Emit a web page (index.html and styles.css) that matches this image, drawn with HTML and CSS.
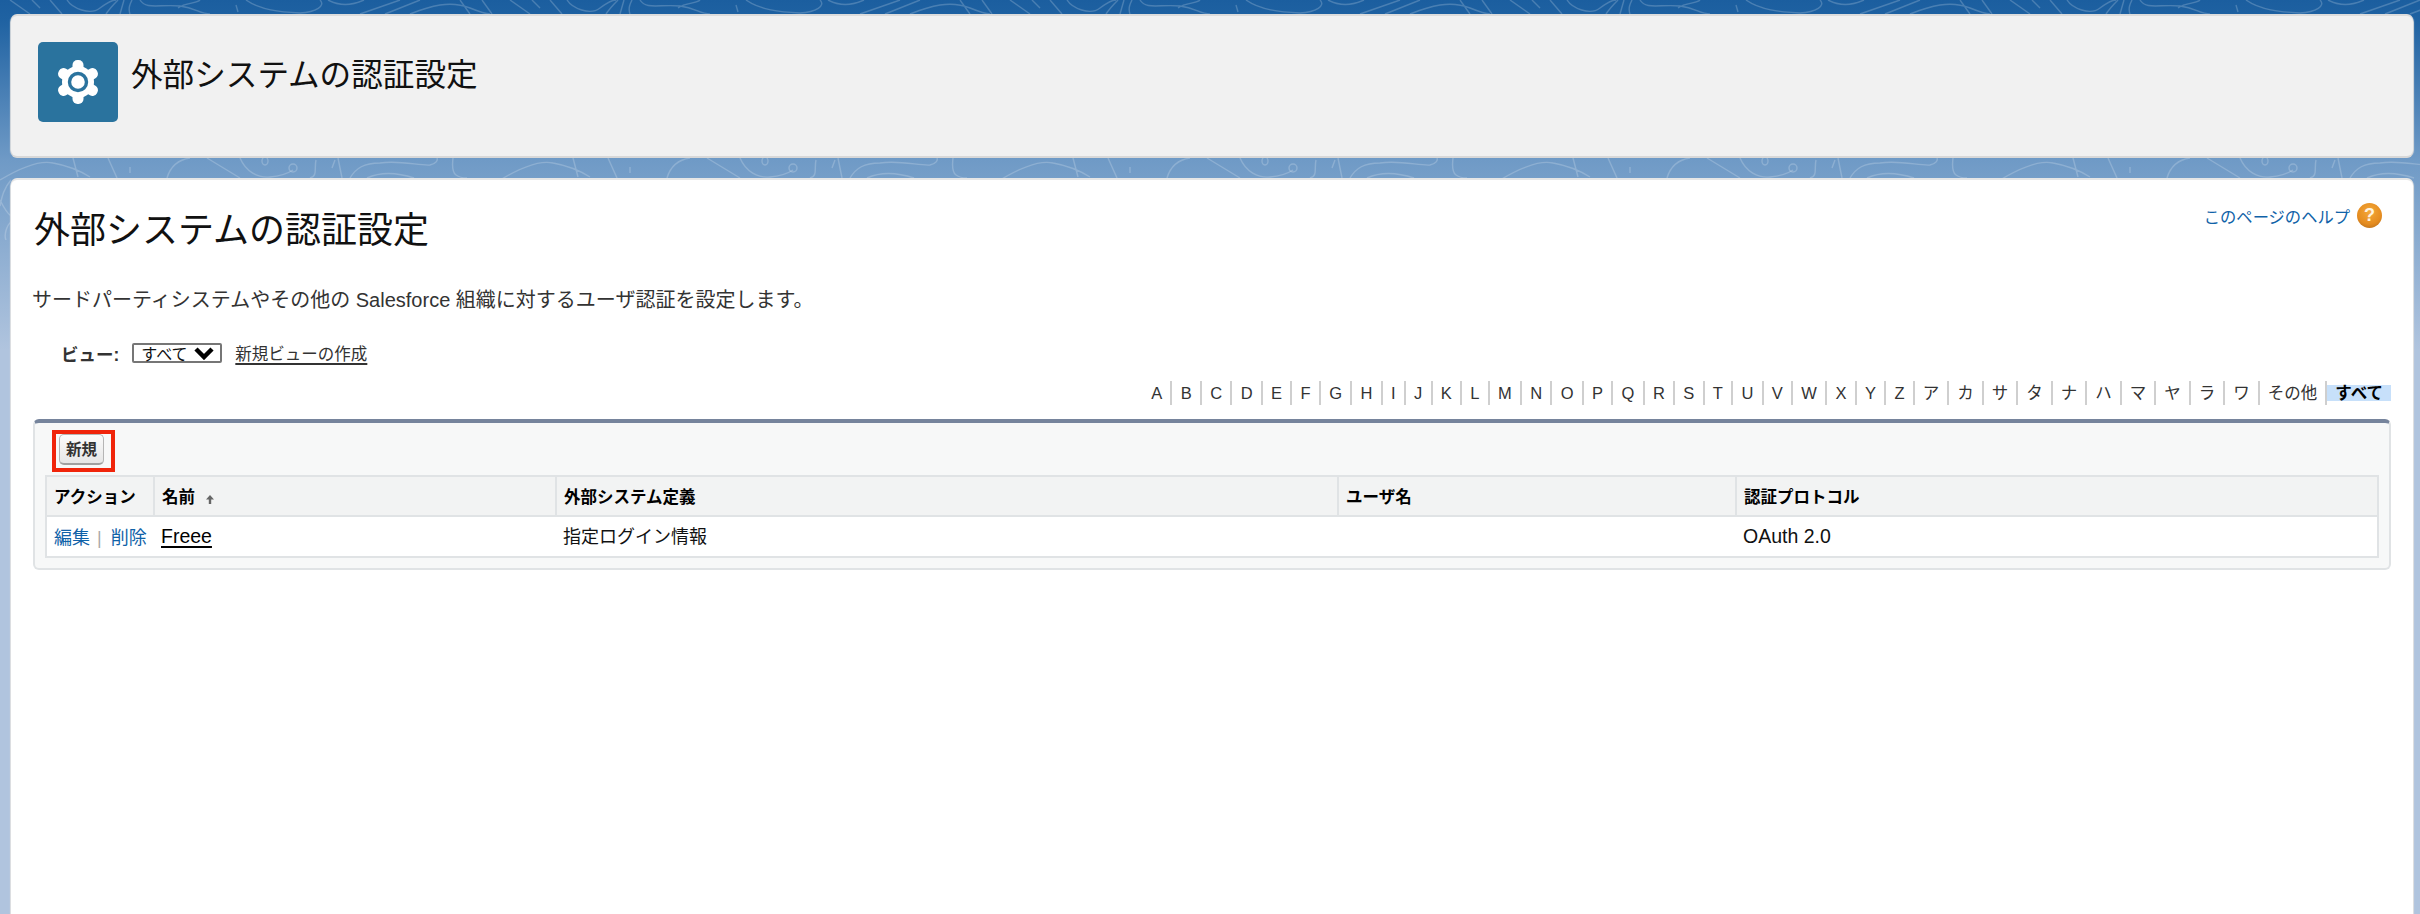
FILE: index.html
```html
<!DOCTYPE html>
<html lang="ja">
<head>
<meta charset="utf-8">
<title>外部システムの認証設定</title>
<link rel="stylesheet" href="styles.css">
</head>
<body>
<svg class="contours" width="2420" height="240" aria-hidden="true">
  <defs>
    <pattern id="topo" width="500" height="240" patternUnits="userSpaceOnUse">
      <g fill="none" stroke="#fff" stroke-opacity=".2" stroke-width="1.4">
        <path d="M10 0L30 14M32 0L40 8M50 0L62 14M67 0C72 8 90 16 100 8C108 2 112 0 116 0M106 14C110 8 114 4 118 0M120 14L124 0M130 14C128 8 130 4 132 0M140 0C146 10 160 4 180 6C196 8 200 14 210 14M200 0C196 4 186 2 178 8M236 5L238 12M246 0C260 10 280 12 300 13C316 12 326 6 320 0M328 0C340 6 350 6 364 0M360 14L400 0M385 14L420 0M410 14C430 6 450 0 470 8C480 12 486 14 490 14M460 0L470 14M482 0L492 14"/>
        <path d="M0 180C20 168 40 160 53 163C70 166 82 172 90 177M73 158L78 177M108 158L117 178M130 167V173M167 178C170 168 176 160 190 158M207 158L240 178M240 158C246 172 258 178 270 177C282 176 290 172 293 170M350 178C356 168 364 163 380 163C400 160 420 166 430 165C436 164 438 160 437 158M453 158C452 166 452 172 456 175C460 178 464 178 467 178M367 178C380 172 396 172 414 178M332 168L335 160M338 158L342 178M316 160C314 168 318 176 310 178"/>
        <circle cx="293" cy="168" r="4"/>
        <ellipse cx="265" cy="161" rx="3" ry="4"/>
        <path d="M0 200C4 208 8 214 11 216M11 180C4 188 2 196 0 206M11 222C6 226 4 236 6 240"/>
      </g>
    </pattern>
  </defs>
  <rect width="2420" height="240" fill="url(#topo)"/>
</svg>

<header class="page-head">
  <div class="head-icon">
    <svg viewBox="0 0 52 52" width="52" height="52" aria-hidden="true">
      <g fill="#fff">
        <circle cx="26" cy="26" r="16"/>
        <rect x="20.500" y="4" width="11" height="44" rx="5"/>
        <rect x="20.500" y="4" width="11" height="44" rx="5" transform="rotate(60 26 26)"/>
        <rect x="20.500" y="4" width="11" height="44" rx="5" transform="rotate(120 26 26)"/>
      </g>
      <circle cx="26" cy="26" r="8.500" fill="#fff" stroke="#2a739e" stroke-width="3.400"/>
    </svg>
  </div>
  <h1 class="head-title">外部システムの認証設定</h1>
</header>

<main class="content">
  <div class="title-row">
    <h2 class="page-title">外部システムの認証設定</h2>
    <a class="help-link" href="#">このページのヘルプ<span class="help-icon">?</span></a>
  </div>
  <p class="description">サードパーティシステムやその他の Salesforce 組織に対するユーザ認証を設定します。</p>
  <div class="view-row">
    <label class="view-label">ビュー:</label>
    <div class="view-select">すべて
      <svg class="chevron" viewBox="0 0 20 14" width="20" height="14" aria-hidden="true"><path d="M2 3l8 8 8-8" fill="none" stroke="#000" stroke-width="4.500"/></svg>
    </div>
    <a class="view-new" href="#">新規ビューの作成</a>
  </div>
  <nav class="alpha">
    <a>A</a><a>B</a><a>C</a><a>D</a><a>E</a><a>F</a><a>G</a><a>H</a><a>I</a><a>J</a><a>K</a><a>L</a><a>M</a><a>N</a><a>O</a><a>P</a><a>Q</a><a>R</a><a>S</a><a>T</a><a>U</a><a>V</a><a>W</a><a>X</a><a>Y</a><a>Z</a><a class="kana">ア</a><a class="kana">カ</a><a class="kana">サ</a><a class="kana">タ</a><a class="kana">ナ</a><a class="kana">ハ</a><a class="kana">マ</a><a class="kana">ヤ</a><a class="kana">ラ</a><a class="kana">ワ</a><a class="kana">その他</a><a class="current">すべて</a>
  </nav>
  <section class="list-block">
    <div class="list-buttons">
      <div class="highlight"><button class="btn" type="button">新規</button></div>
    </div>
    <table class="list">
      <colgroup><col class="c1"><col class="c2"><col class="c3"><col class="c4"><col></colgroup>
      <thead>
        <tr>
          <th>アクション</th>
          <th>名前<svg class="sort" viewBox="0 0 8 9" width="8" height="9" aria-hidden="true"><path d="M4 0L8 4.500H5.200V9H2.800V4.500H0z" fill="#666"/></svg></th>
          <th>外部システム定義</th>
          <th>ユーザ名</th>
          <th>認証プロトコル</th>
        </tr>
      </thead>
      <tbody>
        <tr>
          <td class="actions"><a class="action" href="#">編集</a><span class="pipe">|</span><a class="action" href="#">削除</a></td>
          <td class="latin"><a class="name" href="#">Freee</a></td>
          <td>指定ログイン情報</td>
          <td></td>
          <td class="latin">OAuth 2.0</td>
        </tr>
      </tbody>
    </table>
  </section>
</main>
</body>
</html>
```
FILE: styles.css
```css
* { box-sizing: border-box; }
html, body { height: 914px; }
body {
  margin: 0;
  position: relative;
  overflow: hidden;
  padding: 16px 7px 0 11px;
  display: flex;
  flex-direction: column;
  gap: 24px;
  font-family: "Liberation Sans", "Noto Sans CJK JP", sans-serif;
  color: #222;
  background: linear-gradient(180deg, #1b5e9f 0, #1f62a2 20px, #6f9ac6 160px, #b0c4de 350px, #b0c4de 100%);
}
.contours { position: absolute; left: 0; top: 0; }
.page-head, .content { position: relative; }
.page-head {
  height: 140px;
  flex: none;
  display: flex;
  align-items: flex-start;
  gap: 13px;
  padding: 26px 27px 0;
  background: #f1f1f1;
  border-radius: 6px;
  box-shadow: 0 2px 0 #d8d8d8, 0 -2px 0 #dcdcdc, 0 0 1px 1px #dedede;
}
.head-icon {
  width: 80px;
  height: 80px;
  flex: none;
  display: flex;
  align-items: center;
  justify-content: center;
  background: #2a739e;
  border-radius: 5px;
}
.head-title {
  margin: 13px 0 0;
  font-size: 31.600px;
  line-height: 40px;
  font-weight: 400;
  color: #111;
}
.content {
  flex: 1;
  background: #fff;
  border-radius: 6px 6px 0 0;
  padding: 22px 22px 0;
  box-shadow: 0 -2px 0 #e6e6e6, 0 0 1px 1px #e2e2e2;
}
.title-row { display: flex; justify-content: space-between; align-items: flex-start; }
.page-title {
  margin: 6px 0 0 1px;
  font-size: 36px;
  line-height: 46px;
  font-weight: 400;
  color: #111;
}
.help-link {
  display: flex;
  align-items: center;
  gap: 7px;
  margin: 1px 9px 0 0;
  font-size: 16.300px;
  color: #0f62a8;
  text-decoration: none;
}
.help-icon {
  width: 25px;
  height: 25px;
  border-radius: 50%;
  display: flex;
  align-items: center;
  justify-content: center;
  font-size: 18px;
  font-weight: 700;
  color: #fff4e0;
  background: radial-gradient(circle at 50% 35%, #f4a93a, #e58c1f 60%, #a8641c);
}
.description {
  margin: 33px 0 0 -1px;
  font-size: 20px;
  line-height: 26px;
  color: #333;
}
.view-row {
  display: flex;
  align-items: center;
  gap: 13px;
  margin: 28px 0 0 28px;
  height: 24px;
}
.view-label { font-size: 17.500px; font-weight: 700; color: #333; }
.view-select {
  display: flex;
  align-items: center;
  justify-content: space-between;
  width: 90px;
  height: 20px;
  padding: 0 6px 0 7px;
  border: 2px solid #767676;
  border-radius: 2px;
  font-size: 16px;
  color: #111;
}
.view-new {
  font-size: 16.500px;
  color: #333;
  text-decoration: underline;
  text-decoration-thickness: 2px;
  text-underline-offset: 3px;
}
.alpha {
  display: flex;
  justify-content: flex-end;
  align-items: center;
  height: 24px;
  margin: 16px 0 0;
  font-size: 16.500px;
  color: #333;
}
.alpha a {
  padding: 0 8.250px;
  line-height: 24px;
  border-right: 2px solid #cfcfcf;
}
.alpha a.kana { padding: 0 8px; }
.alpha a.current {
  border: 0;
  height: 16px;
  line-height: 16px;
  padding: 0 8px;
  background: #c7e0fa;
  font-weight: 700;
  color: #000;
}
.list-block {
  margin: 14px 0 0;
  height: 151px;
  background: #f7f8f8;
  border: 2px solid #e0e3e5;
  border-top: 4px solid #76849c;
  border-radius: 6px;
  padding: 7px 10px 0;
}
.list-buttons { height: 45px; padding-left: 7px; }
.highlight {
  display: flex;
  align-items: flex-start;
  width: 63px;
  height: 42px;
  padding-left: 3px;
  border: 4px solid #f0240a;
}
.btn {
  width: 45px;
  height: 31px;
  padding: 0 0 3px;
  border: 1px solid #b5b5b5;
  border-bottom: 2px solid #a0a0a0;
  border-radius: 5px;
  background: linear-gradient(#fbfbfb, #e6e6e6);
  font: 700 15.500px "Liberation Sans", "Noto Sans CJK JP", sans-serif;
  color: #333;
}
.list {
  width: 100%;
  table-layout: fixed;
  border-collapse: collapse;
  background: #fff;
  border: 2px solid #e0e3e5;
}
.c1 { width: 108px; }
.c2 { width: 402px; }
.c3 { width: 782px; }
.c4 { width: 398px; }
.list th {
  height: 40px;
  padding: 0 7px;
  text-align: left;
  font-size: 16.500px;
  font-weight: 700;
  color: #000;
  background: #f2f3f3;
  border-right: 2px solid #e0e3e5;
  border-bottom: 2px solid #e0e3e5;
}
.list th:last-child { border-right: 0; }
.list td {
  height: 41px;
  padding: 0 7px 4px;
  font-size: 18px;
  color: #111;
  white-space: nowrap;
}
.sort { margin-left: 11px; vertical-align: -1px; }
.action { color: #0f62a8; text-decoration: none; }
.pipe { color: #aaa; margin: 0 9px 0 7px; }
.name {
  color: #000;
  text-decoration: underline;
  text-decoration-thickness: 2px;
  text-underline-offset: 3px;
}
.list td.actions { padding-bottom: 2px; }
.list td.latin { padding-bottom: 0; font-size: 19.500px; }
```
